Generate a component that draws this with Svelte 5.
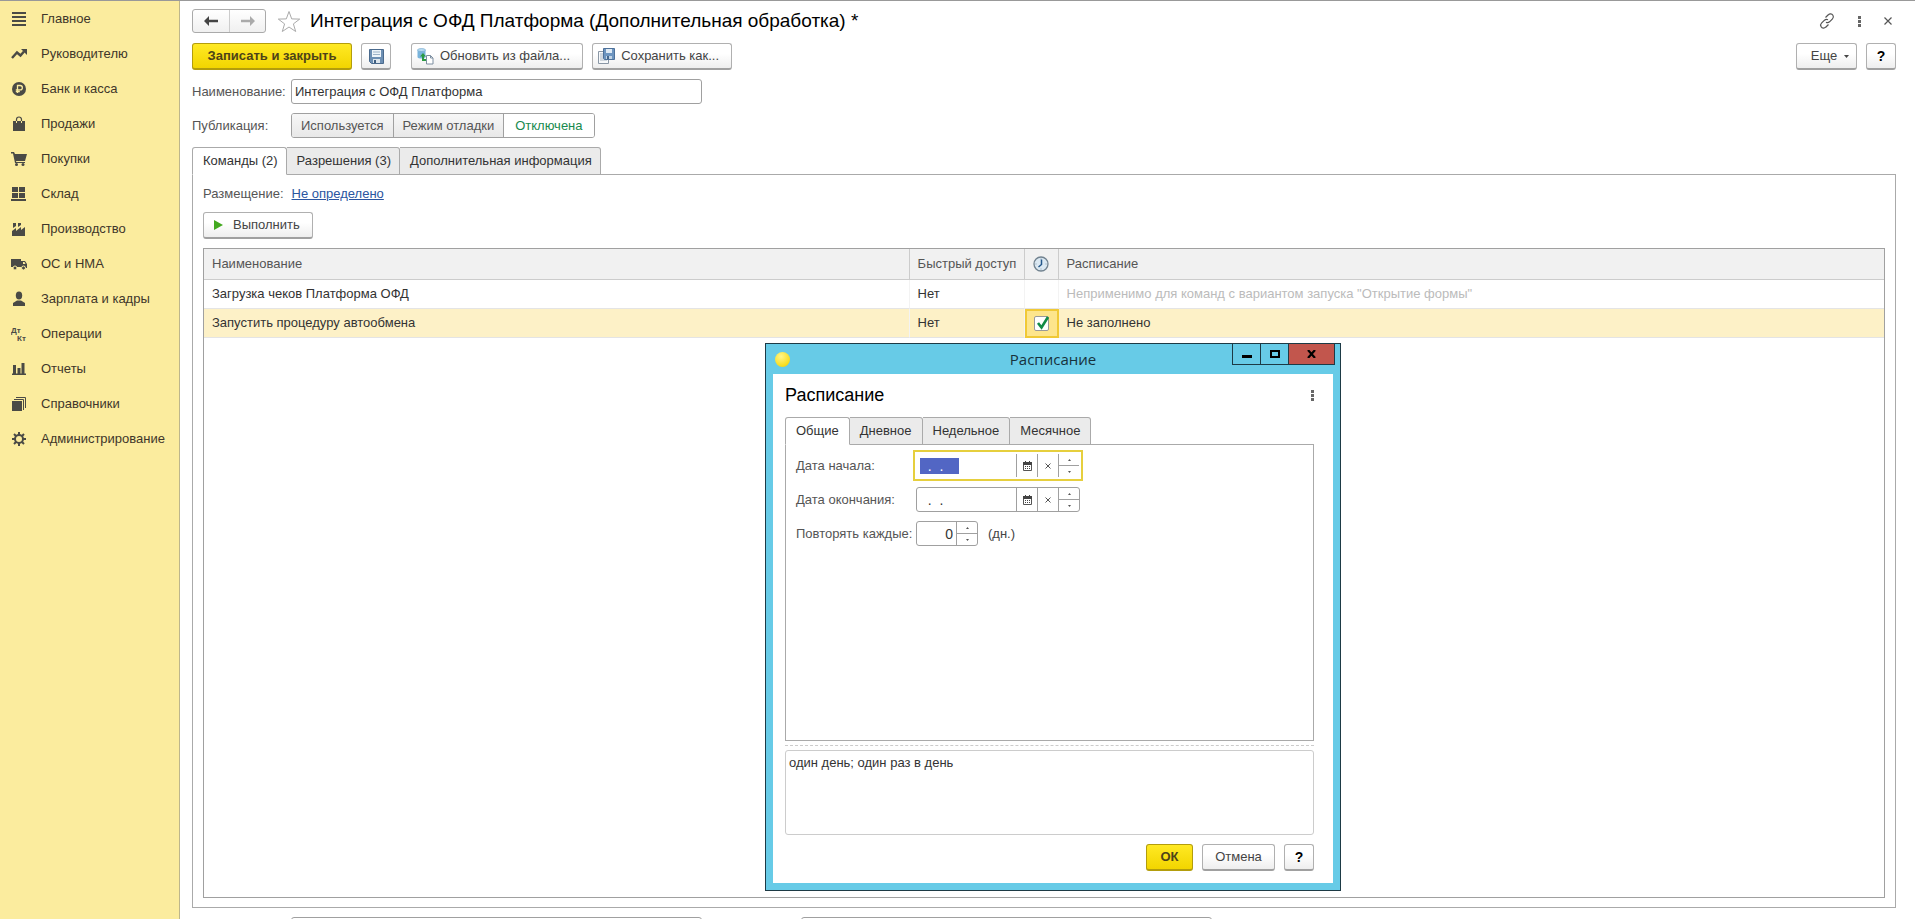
<script lang="ts">
  import { onMount } from 'svelte';

  type Section = { id: string; label: string };

  const sections: Section[] = [
    { id: 'main', label: 'Главное' },
    { id: 'manager', label: 'Руководителю' },
    { id: 'bank', label: 'Банк и касса' },
    { id: 'sales', label: 'Продажи' },
    { id: 'purchases', label: 'Покупки' },
    { id: 'warehouse', label: 'Склад' },
    { id: 'production', label: 'Производство' },
    { id: 'assets', label: 'ОС и НМА' },
    { id: 'salary', label: 'Зарплата и кадры' },
    { id: 'operations', label: 'Операции' },
    { id: 'reports', label: 'Отчеты' },
    { id: 'catalogs', label: 'Справочники' },
    { id: 'admin', label: 'Администрирование' },
  ];

  const publicationModes = ['Используется', 'Режим отладки', 'Отключена'];
  const formTabs = ['Команды (2)', 'Разрешения (3)', 'Дополнительная информация'];
  const scheduleTabs = ['Общие', 'Дневное', 'Недельное', 'Месячное'];
  const emptyDate = '  .  .    ';

  let name = $state('Интеграция с ОФД Платформа');
  let publication = $state('Отключена');
  let formTab = $state(formTabs[0]);
  let scheduleTab = $state(scheduleTabs[0]);
  let scheduled = $state(true);
  let dateFrom = $state(emptyDate);
  let dateTo = $state(emptyDate);
  let repeatDays = $state('0');
  let summary = $state('один день; один раз в день');
  let dialogOpen = $state(true);
  let dateFromInput: HTMLInputElement;

  onMount(() => {
    dateFromInput.focus();
    dateFromInput.select();
  });

  function step(delta: number) {
    repeatDays = String(Math.max(0, Number(repeatDays) + delta));
  }
</script>

{#snippet sectionIcon(id: string)}
  <svg class="section-icon" viewBox="0 0 16 16" aria-hidden="true">
    {#if id === 'main'}
      <path d="M1 1h14v2H1zM1 5h14v2H1zM1 9h14v2H1zM1 13h14v2H1z" />
    {:else if id === 'manager'}
      <path d="M1 12 6 6.500l3.500 3L13 5.500" fill="none" stroke="#4a4a45" stroke-width="2.400" />
      <path d="M10 3h6v6z" />
    {:else if id === 'bank'}
      <circle cx="8" cy="8" r="7" />
      <path d="M6.500 12V4.500h2.700a2.100 2.100 0 0 1 0 4.300H4.800M4.800 10.500h4" fill="none" stroke="#fbec9e" stroke-width="1.300" />
    {:else if id === 'sales'}
      <path d="M2 5h12v10H2z" />
      <path d="M5.500 5V3.500a2.500 2.500 0 0 1 5 0V5" fill="none" stroke="#4a4a45" stroke-width="1.200" />
      <path d="M5.500 7V5M10.500 7V5" fill="none" stroke="#fbec9e" stroke-width="1" />
    {:else if id === 'purchases'}
      <path d="M0 1h3l1 2h12l-2 7H5l.3 1H14v1H4L2 2.500H0z" />
      <circle cx="5.500" cy="13.500" r="1.500" />
      <circle cx="12" cy="13.500" r="1.500" />
    {:else if id === 'warehouse'}
      <path d="M1 1h6v5H1zM8 1h6v5H8zM1 7h6v5H1zM8 7h6v5H8zM0 13h15v2H0z" />
    {:else if id === 'production'}
      <path d="M1 15v-5l4-3v3l5-4v3l4-3v9zM2 2h3v3L2 7zM7 2h3v2L7 6z" />
    {:else if id === 'assets'}
      <path d="M0 3h10v8H0zM10 5h4l2 3v4h-6z" />
      <path d="M12 6h1.500l1 2H12z" fill="#fbec9e" />
      <circle cx="4" cy="12" r="2" stroke="#fbec9e" />
      <circle cx="12.500" cy="12" r="2" stroke="#fbec9e" />
    {:else if id === 'salary'}
      <ellipse cx="8" cy="4.500" rx="3.200" ry="4" />
      <path d="M2 15v-3l4-2.500h4l4 2.500v3z" />
    {:else if id === 'operations'}
      <text x="0" y="7" font-size="8" font-weight="bold">Дт</text>
      <text x="6" y="15" font-size="8" font-weight="bold">Кт</text>
    {:else if id === 'reports'}
      <path d="M2 4h3v9H2zM6.500 7h3v6h-3zM10.500 2h3v11h-3zM1 12.500h14V14H1z" />
    {:else if id === 'catalogs'}
      <path d="M1 5h10v10H1z" />
      <path d="M3 3.500h9.500V14M5 1.500h9.500V12" fill="none" stroke="#4a4a45" />
    {:else}
      <circle cx="8" cy="8" r="4" fill="none" stroke="#4a4a45" stroke-width="2" />
      <path
        d="M8 1v3M8 12v3M1 8h3M12 8h3M3 3l2.200 2.200M10.800 10.800 13 13M13 3l-2.200 2.200M5.200 10.800 3 13"
        stroke="#4a4a45"
        stroke-width="2"
      />
    {/if}
  </svg>
{/snippet}

{#snippet dots()}
  <svg width="3" height="11" viewBox="0 0 3 11" fill="#666" aria-hidden="true">
    <path d="M0 0h3v3H0zM0 4h3v3H0zM0 8h3v3H0z" />
  </svg>
{/snippet}

{#snippet dateButtons()}
  <button class="cell" aria-label="Выбрать дату">
    <svg width="9" height="10" viewBox="0 0 9 10" aria-hidden="true">
      <path d="M.5 1.500h8v8h-8z" fill="#fff" stroke="#555" />
      <path d="M0 1h9v3H0zM2 0h1v2H2zM6 0h1v2H6z" fill="#444" />
      <path d="M2 5h1v1H2zM4 5h1v1H4zM6 5h1v1H6zM2 7h1v1H2zM4 7h1v1H4zM6 7h1v1H6z" fill="#444" />
    </svg>
  </button>
  <button class="cell" aria-label="Очистить">
    <svg width="6" height="6" viewBox="0 0 6 6" stroke="#555" aria-hidden="true"><path d="m.5.5 5 5m0-5-5 5" /></svg>
  </button>
{/snippet}

{#snippet spinner(onstep: (delta: number) => void)}
  <span class="spinner">
    <button aria-label="Увеличить" onclick={() => onstep(1)}>
      <svg width="3" height="2" viewBox="0 0 3 2" fill="#555" aria-hidden="true"><path d="M0 2 1.500 0 3 2z" /></svg>
    </button>
    <button aria-label="Уменьшить" onclick={() => onstep(-1)}>
      <svg width="3" height="2" viewBox="0 0 3 2" fill="#555" aria-hidden="true"><path d="M0 0l1.500 2L3 0z" /></svg>
    </button>
  </span>
{/snippet}

<div class="app">
  <nav class="sidebar">
    {#each sections as section (section.id)}
      <a class="section" href="#{section.id}">
        {@render sectionIcon(section.id)}
        <span>{section.label}</span>
      </a>
    {/each}
  </nav>

  <main class="form">
    <header class="form-header">
      <div class="history">
        <button aria-label="Назад">
          <svg width="14" height="10" viewBox="0 0 14 10" aria-hidden="true">
            <path d="M0 5l5-5v3.700h9v2.600H5V10z" fill="#444" />
          </svg>
        </button>
        <button aria-label="Вперед">
          <svg width="14" height="10" viewBox="0 0 14 10" aria-hidden="true">
            <path d="M14 5 9 0v3.700H0v2.600h9V10z" fill="#aaa" />
          </svg>
        </button>
      </div>
      <button class="plain" aria-label="Добавить в избранное">
        <svg width="24" height="23" viewBox="0 0 24 23" fill="#fff" stroke="#aaa" aria-hidden="true">
          <path d="m12 1.500 2.700 7.400 8 .2-6.300 4.800 2.300 7.600L12 17l-6.700 4.500 2.300-7.600L1.300 9.100l8-.2z" />
        </svg>
      </button>
      <h1>Интеграция с ОФД Платформа (Дополнительная обработка) *</h1>
      <div class="window-tools">
        <button class="plain" aria-label="Получить ссылку">
          <svg width="16" height="16" viewBox="0 0 16 16" fill="none" stroke="#555" stroke-width="1.200" aria-hidden="true">
            <path d="M6.500 4.500 9.300 1.800a2.900 2.900 0 0 1 4.600.400 2.900 2.900 0 0 1-.4 3.600l-3 3A3 3 0 0 1 7 9.200" />
            <path d="m9.500 11.500-2.800 2.700a2.900 2.900 0 0 1-4.600-.400 2.900 2.900 0 0 1 .4-3.600l3-3A3 3 0 0 1 9 6.800" />
          </svg>
        </button>
        <button class="plain" aria-label="Меню">{@render dots()}</button>
        <button class="plain" aria-label="Закрыть">
          <svg width="8" height="8" viewBox="0 0 8 8" stroke="#555" stroke-width="1.200" aria-hidden="true">
            <path d="m.5.5 7 7m0-7-7 7" />
          </svg>
        </button>
      </div>
    </header>

    <div class="commands">
      <button class="btn primary write">Записать и закрыть</button>
      <button class="btn square" aria-label="Записать">
        <svg width="15" height="15" viewBox="0 0 15 15" aria-hidden="true">
          <path d="M.5.5h14v14h-12l-2-2z" fill="#6d8fb3" stroke="#4a6a8d" />
          <path d="M3 1h9v7H3z" fill="#eef4f9" />
          <path d="M4 3h7M4 5.500h7" stroke="#9db3c8" />
          <path d="M4 10h7v4H4z" fill="#dce5ec" />
          <path d="M5 11h2v3H5z" fill="#3f5e80" />
        </svg>
      </button>
      <button class="btn with-icon update">
        <svg width="17" height="17" viewBox="0 0 17 17" aria-hidden="true">
          <path d="M.5 2v7c0 2 8 2 8 0V2z" fill="#79b4dc" />
          <ellipse cx="4.500" cy="2" rx="4" ry="1.500" fill="#b9dcf2" stroke="#6ba3ca" stroke-width=".6" />
          <path d="M9.500 7.500h4l2.500 2.500v6H9.500z" fill="#fff" stroke="#7c8ea0" />
          <path d="M13.500 7.500V10H16" fill="none" stroke="#7c8ea0" />
          <path d="M3 8.500 6 5l3 3.500H7V11h2v2H5V8.500z" fill="#2c9a43" />
        </svg>
        Обновить из файла...
      </button>
      <button class="btn with-icon">
        <svg width="17" height="17" viewBox="0 0 17 17" aria-hidden="true">
          <path d="M.5 3.500h10v12H.5z" fill="#f7f9fb" stroke="#8a97a5" />
          <path d="M2 6h3M2 8h3M2 10h7M2 12h7" stroke="#aab6c2" />
          <path d="M5.500.500h11v11h-10l-1-1z" fill="#6d95c0" stroke="#4d719a" />
          <path d="M8 1h6v4H8z" fill="#dfeaf4" />
          <path d="M8 8h6v3H8z" fill="#c3d5e5" />
          <path d="M9 8h2v3H9z" fill="#45668b" />
        </svg>
        Сохранить как...
      </button>
      <div class="commands-right">
        <button class="btn more">
          Еще
          <svg width="5" height="3" viewBox="0 0 5 3" aria-hidden="true"><path d="M0 0h5L2.500 3z" fill="#444" /></svg>
        </button>
        <button class="btn help">?</button>
      </div>
    </div>

    <div class="row">
      <label for="name">Наименование:</label>
      <input id="name" class="text-input" bind:value={name} />
    </div>

    <div class="row">
      <span class="row-label" id="publication-label">Публикация:</span>
      <div class="toggle" role="radiogroup" aria-labelledby="publication-label">
        {#each publicationModes as mode}
          <label class:selected={publication === mode}>
            <input type="radio" name="publication" value={mode} bind:group={publication} />
            {mode}
          </label>
        {/each}
      </div>
    </div>

    <div class="tabs form-tabs" role="tablist">
      {#each formTabs as tab}
        <button role="tab" aria-selected={formTab === tab} class:active={formTab === tab} onclick={() => (formTab = tab)}>
          {tab}
        </button>
      {/each}
    </div>

    <section class="panel form-panel">
      <div class="placement">
        <span>Размещение:</span>
        <a href="#placement">Не определено</a>
      </div>
      <button class="btn run">
        <svg width="9" height="10" viewBox="0 0 9 10" aria-hidden="true"><path d="M0 0v10l9-5z" fill="#43a91f" /></svg>
        Выполнить
      </button>

      <div class="grid">
        <table>
          <colgroup>
            <col class="col-name" />
            <col class="col-quick" />
            <col class="col-clock" />
            <col />
          </colgroup>
          <thead>
            <tr>
              <th>Наименование</th>
              <th>Быстрый доступ</th>
              <th class="clock">
                <svg width="16" height="16" viewBox="0 0 16 16" role="img" aria-label="По расписанию">
                  <circle cx="8" cy="8" r="7" fill="#dbe8f2" stroke="#71828f" stroke-width="1.300" />
                  <path d="M8 2.500v1M8 12.500v1M2.500 8h1M12.500 8h1" stroke="#8aa0b2" />
                  <path d="M8.500 3.500V8.500L5.500 11" fill="none" stroke="#24578a" stroke-width="1.500" />
                </svg>
              </th>
              <th>Расписание</th>
            </tr>
          </thead>
          <tbody>
            <tr>
              <td>Загрузка чеков Платформа ОФД</td>
              <td>Нет</td>
              <td></td>
              <td class="muted">Неприменимо для команд с вариантом запуска "Открытие формы"</td>
            </tr>
            <tr class="current">
              <td>Запустить процедуру автообмена</td>
              <td>Нет</td>
              <td class="check-cell">
                <label class="check">
                  <input type="checkbox" bind:checked={scheduled} aria-label="Выполнять по расписанию" />
                  {#if scheduled}
                    <svg width="16" height="16" viewBox="0 0 16 16" aria-hidden="true">
                      <path d="m4 7 3.500 4.500L14 1" fill="none" stroke="#128a45" stroke-width="2.600" />
                    </svg>
                  {/if}
                </label>
              </td>
              <td>Не заполнено</td>
            </tr>
          </tbody>
        </table>
      </div>
    </section>

    <footer class="form-footer">
      <input class="text-input" aria-label="Комментарий" />
      <input class="text-input" aria-label="Ответственный" />
    </footer>
  </main>

  {#if dialogOpen}
    <div class="dialog" role="dialog" aria-labelledby="dialog-title">
      <div class="titlebar">
        <span class="app-dot"></span>
        <span class="caption">Расписание</span>
        <div class="window-buttons">
          <button aria-label="Свернуть">
            <svg width="10" height="10" viewBox="0 0 10 10" aria-hidden="true"><path d="M0 6h10v3H0z" /></svg>
          </button>
          <button aria-label="Развернуть">
            <svg width="10" height="8" viewBox="0 0 10 8" aria-hidden="true">
              <path d="M1 1h8v6H1z" fill="none" stroke="#000" stroke-width="2" />
            </svg>
          </button>
          <button class="close" aria-label="Закрыть" onclick={() => (dialogOpen = false)}>
            <svg width="9" height="8" viewBox="0 0 9 8" aria-hidden="true">
              <path d="m1 0 7 8M8 0 1 8" stroke="#000" stroke-width="2.200" />
            </svg>
          </button>
        </div>
      </div>

      <div class="dialog-body">
        <div class="dialog-header">
          <h2 id="dialog-title">Расписание</h2>
          <button class="plain" aria-label="Меню">{@render dots()}</button>
        </div>

        <div class="tabs" role="tablist">
          {#each scheduleTabs as tab}
            <button
              role="tab"
              aria-selected={scheduleTab === tab}
              class:active={scheduleTab === tab}
              onclick={() => (scheduleTab = tab)}
            >
              {tab}
            </button>
          {/each}
        </div>

        <div class="panel fields">
          <div class="field-row">
            <label for="date-from">Дата начала:</label>
            <div class="field date">
              <input id="date-from" bind:this={dateFromInput} bind:value={dateFrom} />
              {@render dateButtons()}
              {@render spinner(() => {})}
            </div>
          </div>
          <div class="field-row">
            <label for="date-to">Дата окончания:</label>
            <div class="field date">
              <input id="date-to" bind:value={dateTo} />
              {@render dateButtons()}
              {@render spinner(() => {})}
            </div>
          </div>
          <div class="field-row">
            <label for="repeat">Повторять каждые:</label>
            <div class="field number">
              <input id="repeat" bind:value={repeatDays} />
              {@render spinner(step)}
            </div>
            <span class="unit">(дн.)</span>
          </div>
        </div>

        <div class="splitter"></div>
        <textarea aria-label="Описание расписания" bind:value={summary}></textarea>

        <div class="dialog-actions">
          <button class="btn primary ok">ОК</button>
          <button class="btn cancel" onclick={() => (dialogOpen = false)}>Отмена</button>
          <button class="btn help">?</button>
        </div>
      </div>
    </div>
  {/if}
</div>

<style>
  :global(body) {
    overflow: hidden;
  }

  .app,
  .app * {
    box-sizing: border-box;
  }

  .app {
    position: relative;
    display: flex;
    height: 100vh;
    overflow: hidden;
    border-top: 1px solid #999;
    background: #fff;
    color: #333;
    font: 13px/16px 'Liberation Sans', Arial, sans-serif;
  }

  button,
  input,
  textarea {
    font: inherit;
    color: inherit;
  }

  button {
    display: inline-flex;
    align-items: center;
    justify-content: center;
    padding: 0;
    cursor: pointer;
    white-space: nowrap;
  }

  input:focus {
    outline: none;
  }

  .plain {
    border: 0;
    background: none;
  }

  /* sections */
  .sidebar {
    flex: 0 0 180px;
    border-right: 1px solid #bdb68c;
    background: #fbec9e;
  }

  .section {
    display: flex;
    align-items: center;
    gap: 14px;
    height: 35px;
    padding-left: 11px;
    color: #40362a;
    text-decoration: none;
  }

  .section-icon {
    width: 16px;
    height: 16px;
    fill: #4a4a45;
  }

  /* form */
  .form {
    flex: 1;
    display: flex;
    flex-direction: column;
    min-width: 0;
    height: calc(100% + 23px);
    padding: 8px 19px 0 12px;
  }

  .form-header {
    display: flex;
    align-items: center;
    height: 24px;
  }

  .history {
    display: flex;
    height: 24px;
    margin-right: 11px;
    border: 1px solid #aaa;
    border-radius: 3px;
    background: linear-gradient(#fff, #f0f0f0);
  }

  .history button {
    width: 36px;
    border: 0;
    background: none;
  }

  .history button + button {
    border-left: 1px solid #ccc;
  }

  h1,
  h2 {
    margin: 0;
    color: #000;
    font-size: 18px;
    line-height: 22px;
    font-weight: normal;
  }

  h1 {
    margin-left: 9px;
    font-size: 19px;
  }

  .window-tools {
    display: flex;
    align-items: center;
    gap: 23px;
    margin-left: auto;
    padding-right: 4px;
  }

  .commands {
    display: flex;
    gap: 9px;
    margin-top: 10px;
  }

  .commands-right {
    display: flex;
    gap: 9px;
    margin-left: auto;
  }

  .btn {
    height: 27px;
    border: 1px solid #b0b0b0;
    border-bottom: 2px solid #a0a0a0;
    border-radius: 3px;
    background: linear-gradient(#fff 40%, #eee);
    color: #444;
  }

  .primary {
    border-color: #b39d0c;
    background: linear-gradient(#ffe924, #f2d500);
    color: #4d4318;
    font-weight: bold;
  }

  .write {
    width: 160px;
  }

  .square,
  .help {
    width: 30px;
  }

  .help {
    color: #000;
    font-size: 14px;
    font-weight: bold;
  }

  .with-icon {
    gap: 6px;
    padding: 0 12px 0 5px;
  }

  .update {
    margin-left: 11px;
  }

  .more {
    gap: 7px;
    width: 61px;
    padding-left: 7px;
  }

  .row {
    display: flex;
    align-items: center;
    height: 25px;
    margin-top: 9px;
    color: #555;
  }

  .row > label,
  .row-label {
    width: 99px;
  }

  .text-input {
    width: 411px;
    height: 25px;
    padding: 0 3px;
    border: 1px solid #a0a0a0;
    border-radius: 3px;
    background: #fff;
    color: #333;
  }

  .toggle {
    display: flex;
    height: 25px;
    border: 1px solid #a0a0a0;
    border-radius: 3px;
    overflow: hidden;
  }

  .toggle label {
    display: flex;
    align-items: center;
    padding: 0 9px;
    background: linear-gradient(#f7f7f7, #e8e8e8);
  }

  .toggle label + label {
    border-left: 1px solid #a0a0a0;
  }

  .toggle label.selected {
    padding: 0 11px;
    background: #fff;
    color: #178a4e;
  }

  .toggle input {
    appearance: none;
    position: absolute;
    margin: 0;
  }

  /* tabs */
  .tabs {
    position: relative;
    display: flex;
    height: 28px;
    margin-bottom: -1px;
  }

  .form-tabs {
    margin-top: 9px;
  }

  .tabs button {
    padding: 0 10px;
    border: 1px solid #aaa;
    border-left-width: 0;
    border-radius: 0 3px 0 0;
    background: #ebebeb;
  }

  .form-tabs button {
    padding: 0 8px 0 10px;
  }

  .tabs button:first-child {
    border-left-width: 1px;
    border-radius: 3px 3px 0 0;
  }

  .tabs button.active {
    border-bottom-color: #fff;
    background: #fff;
  }

  .panel {
    border: 1px solid #aaa;
  }

  .form-panel {
    flex: 1;
    display: flex;
    flex-direction: column;
    align-items: flex-start;
    padding: 11px 10px 9px;
  }

  .placement {
    display: flex;
    gap: 8px;
    color: #555;
  }

  .placement a {
    color: #2a55a0;
  }

  .run {
    gap: 10px;
    margin: 10px 0 9px;
    padding: 0 12px 0 10px;
  }

  .grid {
    flex: 1;
    width: 100%;
    border: 1px solid #a0a0a0;
  }

  table {
    width: 100%;
    table-layout: fixed;
    border-collapse: separate;
    border-spacing: 0;
  }

  .col-name {
    width: 42%;
  }

  .col-quick {
    width: 115px;
  }

  .col-clock {
    width: 34px;
  }

  th,
  td {
    height: 29px;
    padding: 0 8px;
    border-bottom: 1px solid #e4e4e4;
    text-align: left;
    font-weight: normal;
    white-space: nowrap;
  }

  th {
    height: 31px;
    border-bottom-color: #ccc;
    background: #f1f1f1;
    color: #555;
  }

  th:not(:last-child) {
    border-right: 1px solid #ccc;
  }

  td:not(:last-child) {
    border-right: 1px solid #f3f3f3;
  }

  .clock {
    padding: 0;
    text-align: center;
  }

  .clock svg {
    display: block;
    margin: 0 auto;
  }

  .muted {
    color: #bbb;
  }

  .current td {
    background: #fdf1c7;
  }

  .current td.check-cell {
    padding: 0;
    border: 2px solid #f0c936;
    background: #fde58c;
  }

  .check {
    display: grid;
    justify-content: center;
  }

  .check input,
  .check svg {
    grid-area: 1 / 1;
  }

  .check input {
    appearance: none;
    width: 15px;
    height: 15px;
    margin: 0;
    border: 1px solid #999;
    border-radius: 2px;
    background: #fff;
  }

  .form-footer {
    display: flex;
    gap: 99px;
    padding: 9px 0 0 99px;
  }

  /* schedule dialog */
  .dialog {
    position: absolute;
    top: 342px;
    left: 765px;
    width: 576px;
    border: 1px solid #1d3a45;
    background: #67cbe7;
  }

  .titlebar {
    position: relative;
    display: flex;
    align-items: center;
    justify-content: center;
    height: 30px;
  }

  .app-dot {
    position: absolute;
    left: 9px;
    width: 15px;
    height: 15px;
    border-radius: 50%;
    background: radial-gradient(circle at 40% 30%, #fff68a, #f7dc1c 70%, #d9bd22);
  }

  .caption {
    color: #17323c;
    font: 15px/20px 'Open Sans', 'Noto Sans', sans-serif;
  }

  .window-buttons {
    position: absolute;
    top: 0;
    right: 5px;
    display: flex;
    height: 21px;
    border: 1px solid #1d3a45;
    border-top: 0;
  }

  .window-buttons button {
    width: 28px;
    border: 0;
    border-right: 1px solid #1d3a45;
    background: none;
  }

  .window-buttons .close {
    width: 45px;
    border-right: 0;
    background: #c2564d;
  }

  .dialog-body {
    margin: 0 7px 7px;
    padding: 10px 19px 12px 12px;
    background: #fff;
  }

  .dialog-header {
    display: flex;
    align-items: center;
    justify-content: space-between;
    height: 22px;
    margin-bottom: 11px;
  }

  .fields {
    display: flex;
    flex-direction: column;
    gap: 9px;
    height: 297px;
    padding: 8px 10px;
  }

  .field-row {
    display: flex;
    align-items: center;
    height: 25px;
    color: #555;
  }

  .field-row label {
    width: 120px;
    white-space: nowrap;
  }

  .field {
    display: flex;
    height: 25px;
    border: 1px solid #a0a0a0;
    border-radius: 3px;
    background: #fff;
    color: #333;
  }

  .field input {
    flex: 1;
    min-width: 0;
    padding: 0 3px;
    border: 0;
    background: none;
    font-size: 14px;
  }

  .field input::selection {
    background: #5266c4;
    color: #fff;
  }

  .date {
    width: 164px;
  }

  .date:focus-within {
    border-color: transparent;
    border-radius: 0;
    outline: 2px solid #e6cf3e;
    outline-offset: 1px;
  }

  .number {
    width: 62px;
  }

  .number input {
    text-align: right;
  }

  .cell {
    width: 21px;
    border: 0;
    border-left: 1px solid #a0a0a0;
    background: none;
  }

  .spinner {
    display: flex;
    flex-direction: column;
    width: 21px;
    border-left: 1px solid #a0a0a0;
  }

  .spinner button {
    flex: 1;
    border: 0;
    background: none;
  }

  .spinner button + button {
    border-top: 1px solid #a0a0a0;
  }

  .unit {
    margin-left: 10px;
    color: #444;
  }

  .splitter {
    margin: 4px 0;
    border-top: 1px dashed #ccc;
  }

  textarea {
    display: block;
    width: 100%;
    height: 85px;
    padding: 4px 3px;
    border: 1px solid #ccc;
    border-radius: 3px;
    resize: none;
    outline: none;
  }

  .dialog-actions {
    display: flex;
    justify-content: flex-end;
    gap: 9px;
    margin-top: 9px;
  }

  .ok {
    width: 47px;
  }

  .cancel {
    width: 73px;
  }
</style>
